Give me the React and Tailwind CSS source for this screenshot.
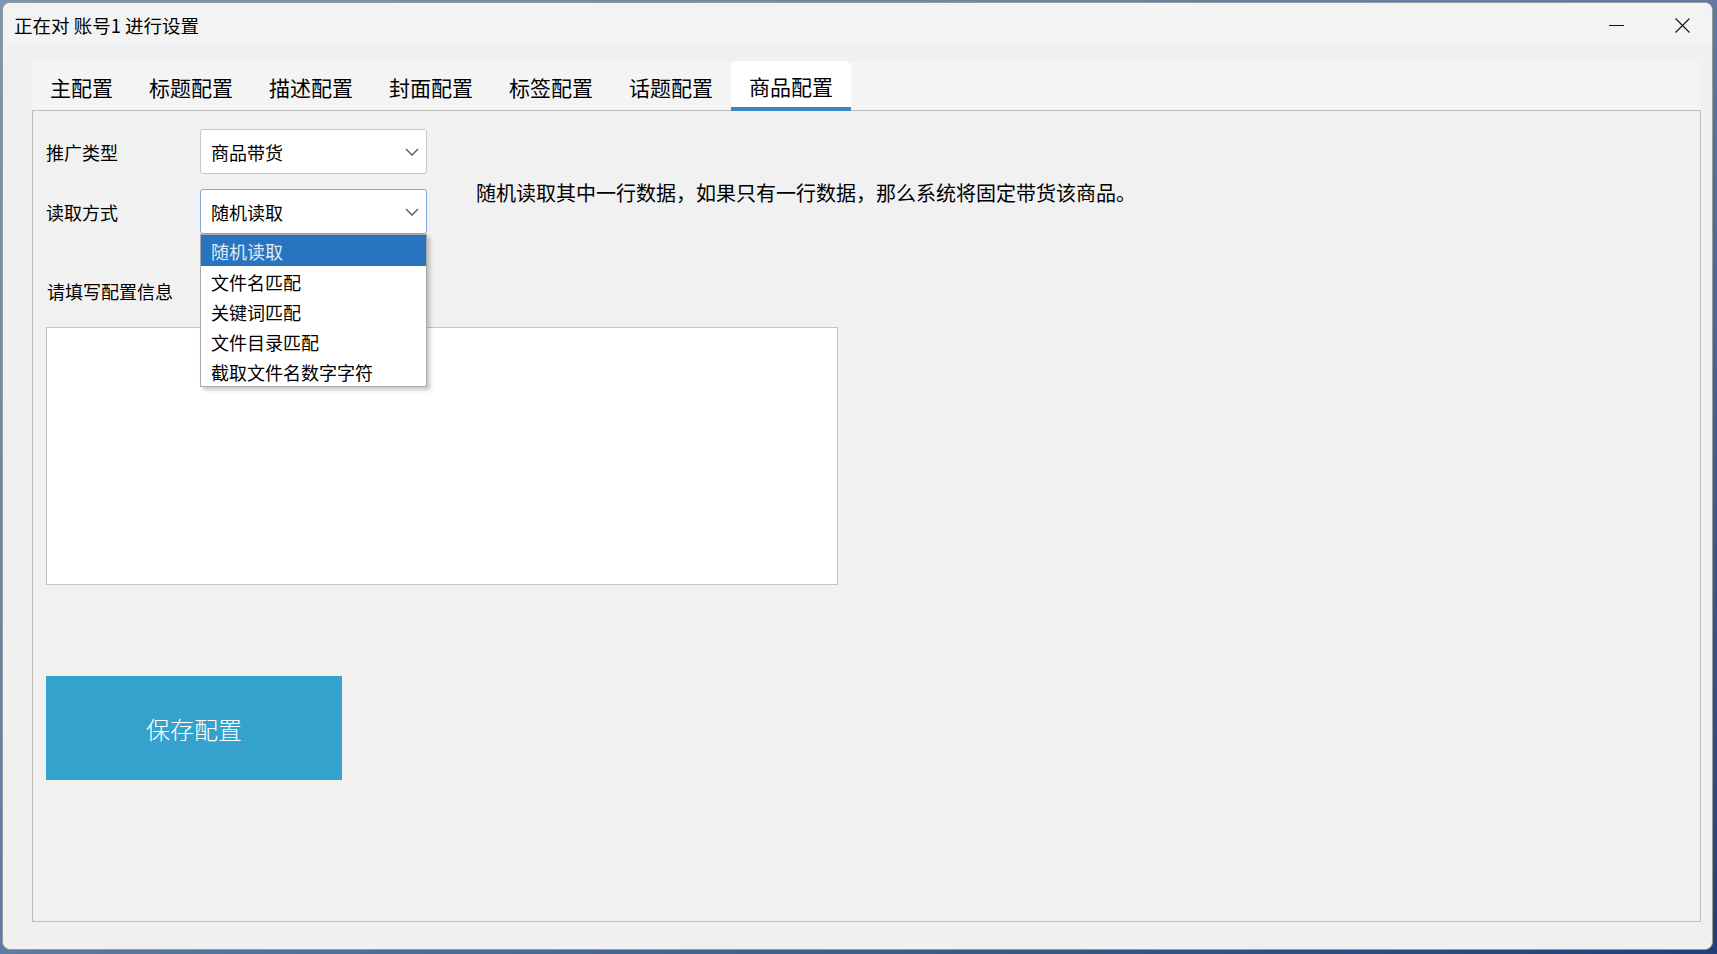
import React from "react";

const FONT = { fontFamily: '"Noto Sans CJK SC", "Noto Sans", "Liberation Sans", sans-serif' };

function Chevron() {
  return (
    <svg width="14" height="8" viewBox="0 0 14 8" fill="none">
      <path d="M1 1 L7 7 L13 1" stroke="#555" strokeWidth="1.3" />
    </svg>
  );
}

function Select({ value, focused, children }) {
  return (
    <div className="relative">
      <div
        className={
          "w-[227px] h-[45px] bg-white rounded-[3px] border flex items-center justify-between pl-[10px] pr-[7px] text-[18px] leading-[26px] text-black " +
          (focused ? "border-[#7fa9dc]" : "border-[#c6c6c6]")
        }
      >
        <span>{value}</span>
        <Chevron />
      </div>
      {children}
    </div>
  );
}

export default function App() {
  const tabs = ["主配置", "标题配置", "描述配置", "封面配置", "标签配置", "话题配置", "商品配置"];
  const options = ["随机读取", "文件名匹配", "关键词匹配", "文件目录匹配", "截取文件名数字字符"];
  return (
    <div
      className="w-[1717px] h-[954px] bg-gradient-to-br from-[#7d95b0] via-[#5c7aa4] to-[#233f7a] pt-[2px] pl-[2px] overflow-hidden"
      style={FONT}
    >
      <div className="w-[1711px] h-[948px] rounded-[8px] border border-[#9a9a9a] bg-[#f0f0f0] flex flex-col overflow-hidden">
        {/* Title bar */}
        <div className="h-[42px] bg-[#f3f3f3] flex items-center justify-between pl-[11px] pr-[22px] shrink-0">
          <span className="text-[18.5px] leading-[28px] text-black pt-[2px]">正在对 账号1 进行设置</span>
          <div className="flex items-center gap-[51px] pt-[2px]">
            <svg width="15" height="15" viewBox="0 0 15 15">
              <path d="M0 7.5 H15" stroke="#111" strokeWidth="1" />
            </svg>
            <svg width="15" height="15" viewBox="0 0 15 15">
              <path d="M0.5 0.5 L14.5 14.5 M14.5 0.5 L0.5 14.5" stroke="#111" strokeWidth="1.1" />
            </svg>
          </div>
        </div>

        {/* Tab control */}
        <div className="ml-[29px] mt-[16px] w-[1669px] flex flex-col">
          <div className="h-[49px] flex items-end bg-[linear-gradient(to_bottom,#f0f0f0_0px,#f0f0f0_1px,#f4f4f4_1px)]">
            {tabs.map((t, i) =>
              i === tabs.length - 1 ? (
                <div
                  key={t}
                  className="relative z-10 -mb-[1px] h-[50px] px-[18px] bg-white rounded-t-[6px] border-b-[4px] border-[#3f86c8] flex items-center pt-[4px] text-[21px] leading-[28px] text-black"
                >
                  {t}
                </div>
              ) : (
                <div
                  key={t}
                  className="h-[48px] px-[18px] flex items-center pt-[2px] text-[21px] leading-[28px] text-black"
                >
                  {t}
                </div>
              )
            )}
          </div>

          <div className="h-[812px] border border-[#bdbdbd] bg-[#f1f1f1] pl-[13px] pt-[18px]">
            <div className="flex items-start">
              <div className="flex flex-col gap-[15px]">
                <div className="flex items-center">
                  <span className="w-[154px] text-[18px] leading-[26px] text-black">推广类型</span>
                  <Select value="商品带货" />
                </div>
                <div className="flex items-center">
                  <span className="w-[154px] text-[18px] leading-[26px] text-black">读取方式</span>
                  <Select value="随机读取" focused>
                    <div className="absolute left-0 top-full w-[227px] z-20 bg-white border border-[#a7a7a7] shadow-[3px_3px_4px_rgba(0,0,0,0.22)] flex flex-col">
                      {options.map((o, i) => (
                        <div
                          key={o}
                          className={
                            "pl-[10px] flex items-center pt-[1px] text-[18px] leading-[26px] " +
                            (i === 0 ? "h-[31px] bg-[#2874be] text-[#dfe9f5]" : "h-[30px] text-black")
                          }
                        >
                          {o}
                        </div>
                      ))}
                    </div>
                  </Select>
                </div>
              </div>
              <div className="ml-[49px] mt-[50px] text-[20px] leading-[28px] text-black">
                随机读取其中一行数据，如果只有一行数据，那么系统将固定带货该商品。
              </div>
            </div>

            <div className="mt-[44px] text-[18px] leading-[26px] text-black pl-[1px]">请填写配置信息</div>

            <div className="mt-[23px] w-[792px] h-[258px] bg-white border border-[#c4c4c4]"></div>

            <button className="mt-[91px] w-[296px] h-[104px] bg-[#34a2cc] text-white text-[24px] leading-[32px] font-light flex items-center justify-center pt-[2px]">
              保存配置
            </button>
          </div>
        </div>
      </div>
    </div>
  );
}
